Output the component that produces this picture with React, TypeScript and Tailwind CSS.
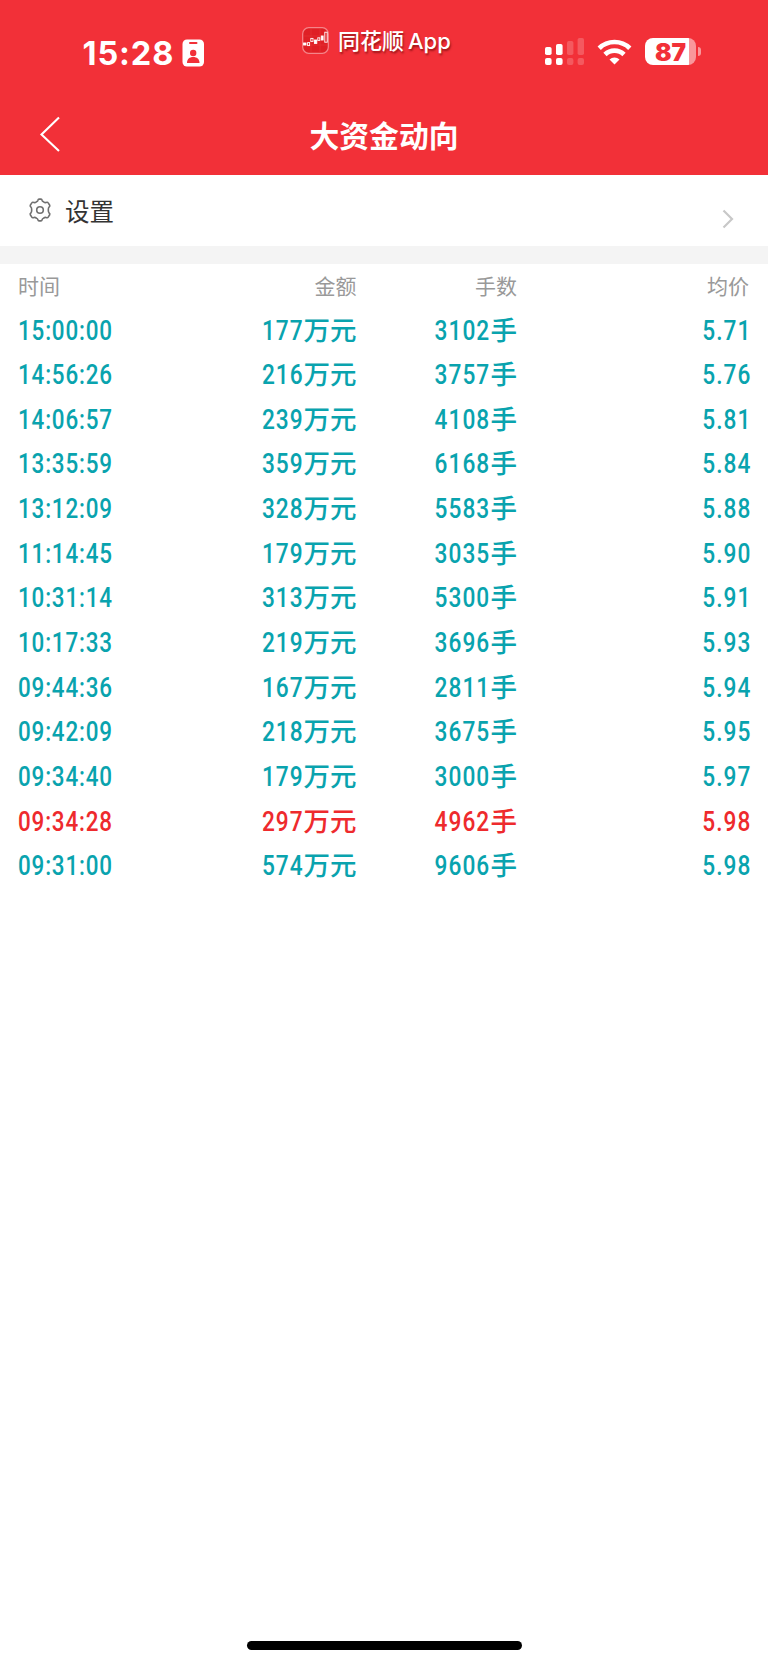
import React from "react";
import clsx from "clsx";

interface Trade {
  time: string;
  amount: number;
  hands: number;
  price: string;
  up?: boolean;
}

const trades: Trade[] = [
  { time: "15:00:00", amount: 177, hands: 3102, price: "5.71" },
  { time: "14:56:26", amount: 216, hands: 3757, price: "5.76" },
  { time: "14:06:57", amount: 239, hands: 4108, price: "5.81" },
  { time: "13:35:59", amount: 359, hands: 6168, price: "5.84" },
  { time: "13:12:09", amount: 328, hands: 5583, price: "5.88" },
  { time: "11:14:45", amount: 179, hands: 3035, price: "5.90" },
  { time: "10:31:14", amount: 313, hands: 5300, price: "5.91" },
  { time: "10:17:33", amount: 219, hands: 3696, price: "5.93" },
  { time: "09:44:36", amount: 167, hands: 2811, price: "5.94" },
  { time: "09:42:09", amount: 218, hands: 3675, price: "5.95" },
  { time: "09:34:40", amount: 179, hands: 3000, price: "5.97" },
  { time: "09:34:28", amount: 297, hands: 4962, price: "5.98", up: true },
  { time: "09:31:00", amount: 574, hands: 9606, price: "5.98" },
];

const StatusBar = () => (
  <div className="flex h-[104px] items-start">
    <div className="flex w-[302px] items-center pt-[34px] pl-[82.5px]">
      <span className="w-[98.5px] pt-px font-['Inter'] text-[32.5px] leading-[38px] font-bold tracking-[0.9px] whitespace-nowrap">
        15:28
      </span>
      {/* ID badge */}
      <svg width="23" height="28" viewBox="0 0 23 28" className="mt-[-2px] ml-[1px]">
        <rect x="0.5" y="0.5" width="21.5" height="27" rx="4.5" fill="white" />
        <rect x="7" y="3" width="8.5" height="2" rx="1" fill="#f23038" />
        <circle cx="11.2" cy="14" r="3.2" fill="#f23038" />
        <path d="M5 24c0-4 2.5-6 6.2-6s6.3 2 6.3 6z" fill="#f23038" />
      </svg>
    </div>

    <div className="flex w-[243px] items-center gap-[9px] pt-[24px]">
      <svg width="27" height="27" viewBox="0 0 27 27" className="mt-[-1px]">
        <rect x="0.7" y="0.7" width="25.6" height="25.6" rx="6" fill="#df1f25" stroke="#f58489" strokeWidth="1.2" />
        <path d="M1 9h25M1 18h25M9 1v25M18 1v25" stroke="#e53a3f" strokeWidth="0.5" />
        <g fill="white" stroke="white" strokeWidth="0.9">
          <rect x="1.6" y="16" width="2.4" height="2" />
          <rect x="5.6" y="15.6" width="2" height="3" fill="none" />
          <rect x="8.8" y="11.4" width="2.2" height="3" fill="none" />
          <rect x="12.4" y="13" width="2.4" height="3.4" />
          <rect x="15.8" y="10.8" width="2" height="2.6" fill="none" />
          <rect x="19.3" y="9" width="1.8" height="4" />
          <rect x="22.8" y="5.2" width="2.4" height="10" fill="none" />
        </g>
      </svg>
      <span className="pt-[1px] font-['Inter','Noto_Sans_CJK_SC',sans-serif] text-[22px] leading-8 font-medium whitespace-nowrap [text-shadow:1px_2px_2px_rgba(90,0,0,0.55)]">
        同花顺
        <span className="ml-[4px]">App</span>
      </span>
    </div>

    <div className="flex items-center pt-[37px]">
      <svg width="40" height="29" viewBox="0 0 40 29" fill="white">
        <rect x="0" y="10" width="6.6" height="8" rx="1.8" />
        <rect x="11" y="7" width="6.6" height="11" rx="1.8" />
        <rect x="22" y="4" width="6.4" height="14" rx="1.8" opacity="0.2" />
        <rect x="32.6" y="1" width="6.4" height="17" rx="1.8" opacity="0.2" />
        <rect x="0" y="21" width="6.6" height="7" rx="2" />
        <rect x="11" y="21" width="6.6" height="7" rx="2" />
        <rect x="22" y="21" width="6.4" height="7" rx="2" opacity="0.2" />
        <rect x="32.6" y="21" width="6.4" height="7" rx="2" opacity="0.2" />
      </svg>
      <svg width="35" height="27" viewBox="0 0 35 27" fill="none" stroke="white" strokeWidth="4.7" className="ml-[12px]">
        <path d="M2.2 10.2a22 22 0 0 1 30.6 0" />
        <path d="M8 16.5a13.6 13.6 0 0 1 19 0" />
        <path d="M17.5 26.5l-5-5.1a7.2 7.2 0 0 1 10 0z" fill="white" stroke="none" />
      </svg>
      <div className="ml-[13px] flex h-[27px] w-[51px] items-center justify-center rounded-[8px] bg-[linear-gradient(to_right,white_44px,#f9979b_44px)]">
        <span className="font-['Inter'] text-[24.5px] leading-[30px] font-black text-[#f23038]">
          87
        </span>
      </div>
      <div className="ml-[2px] h-[9px] w-[3px] rounded-r-full bg-[#f9979b]" />
    </div>
  </div>
);

const NavBar = () => (
  <div className="grid h-[70px] grid-cols-[100px_1fr_100px]">
    <svg width="22" height="38" viewBox="0 0 22 38" fill="none" stroke="white" strokeWidth="2.1" className="mt-[12px] ml-[39px]">
      <path d="M20 1.5L2.5 18.5L20 35" />
    </svg>
    <h1 className="pt-[8px] text-center text-[29.8px] leading-[44px] font-bold">大资金动向</h1>
  </div>
);

const SettingsRow = () => (
  <div className="flex h-[71px] items-center bg-white pl-[28px] text-[#333]">
    <svg width="24" height="24" viewBox="0 0 24 24" fill="none" stroke="#707070" strokeWidth="1.6" strokeLinejoin="round">
      <path d="M8.8 3.6Q9.6 3.2 9.9 2.2Q10.2 1.1 11 1.1H13Q13.8 1.1 14.1 2.2Q14.4 3.2 15.2 3.6Q17 4.9 18 4.6Q19.6 3.9 20.2 4.9L21.7 7.2Q22.2 8.2 21.1 9Q20.3 9.7 20.3 12Q20.3 14.3 21.1 15Q22.2 15.8 21.7 16.8L20.2 19.1Q19.6 20.1 18 19.4Q17 19.1 15.2 20.4Q14.4 20.8 14.1 21.8Q13.8 22.9 13 22.9H11Q10.2 22.9 9.9 21.8Q9.6 20.8 8.8 20.4Q7 19.1 6 19.4Q4.4 20.1 3.8 19.1L2.3 16.8Q1.8 15.8 2.9 15Q3.7 14.3 3.7 12Q3.7 9.7 2.9 9Q1.8 8.2 2.3 7.2L3.8 4.9Q4.4 3.9 6 4.6Q7 4.9 8.8 3.6Z" />
      <circle cx="12" cy="12" r="3.3" />
    </svg>
    <span className="ml-[13px] pt-[1px] text-[24.5px] leading-[36px]">设置</span>
    <svg width="12" height="20" viewBox="0 0 12 20" fill="none" stroke="#c8c8c8" strokeWidth="2.2" className="mt-[17px] mr-[34px] ml-auto">
      <path d="M1.5 1.5L10 10L1.5 18.5" />
    </svg>
  </div>
);

const Digits = ({ children, left }: { children: React.ReactNode; left?: boolean }) => (
  <span
    className={clsx(
      "inline-block font-['Roboto'] text-[27px] font-medium",
      left ? "origin-left scale-x-[0.83] tracking-[1px]" : "origin-right scale-x-[0.84] tracking-[1.2px]"
    )}
  >
    {children}
  </span>
);

const App = () => {
  return (
    <div className="flex h-[1665px] w-[768px] flex-col overflow-hidden bg-white font-['Noto_Sans_CJK_SC',sans-serif]">
      <header className="h-[174.5px] shrink-0 bg-[#f23038] text-white">
        <StatusBar />
        <NavBar />
      </header>

      <SettingsRow />
      <div className="h-[18px] shrink-0 bg-[#f4f4f4]" />

      <div className="grid h-[43px] shrink-0 grid-cols-[156px_182.5px_160.5px_232px] items-center pt-px pl-[18px] text-right text-[21px] text-[#999]">
        <span className="text-left">时间</span>
        <span>金额</span>
        <span>手数</span>
        <span>均价</span>
      </div>

      {trades.map((trade) => (
        <div
          key={trade.time}
          className={clsx(
            "grid h-[44.67px] shrink-0 grid-cols-[156px_182.5px_160.5px_232px] items-center pl-[18px] text-right text-[26.5px] leading-[44px] font-medium whitespace-nowrap",
            trade.up ? "text-[#ee2a2d]" : "text-[#09a3ae]"
          )}
        >
          <span className="text-left">
            <Digits left>{trade.time}</Digits>
          </span>
          <span>
            <Digits>{trade.amount}</Digits>万元
          </span>
          <span>
            <Digits>{trade.hands}</Digits>手
          </span>
          <span className="-mr-[2px]">
            <Digits>{trade.price}</Digits>
          </span>
        </div>
      ))}

      <div className="mx-auto mt-auto mb-[15px] h-[9px] w-[275px] shrink-0 rounded-full bg-black" />
    </div>
  );
};

export default App;
